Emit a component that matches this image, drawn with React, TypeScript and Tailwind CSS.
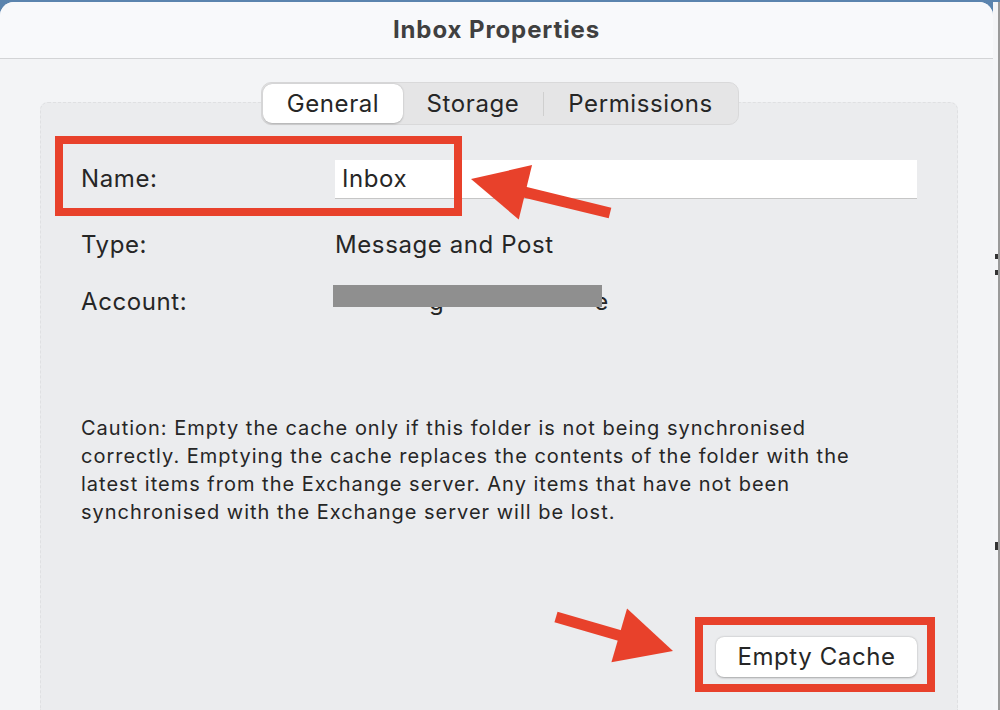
import React from "react"

const font = { fontFamily: "Inter, 'Noto Sans', sans-serif" }

function Arrow({ x1, y1, x2, y2 }: { x1: number; y1: number; x2: number; y2: number }) {
  // shaft from (x1,y1) toward head at (x2,y2)
  const dx = x2 - x1
  const dy = y2 - y1
  const len = Math.hypot(dx, dy)
  const ux = dx / len
  const uy = dy / len
  const headLen = 56
  const headW = 28
  const bx = x2 - ux * headLen
  const by = y2 - uy * headLen
  const px = -uy
  const py = ux
  return (
    <g>
      <line x1={x1} y1={y1} x2={bx + ux * 4} y2={by + uy * 4} stroke="#e8412b" strokeWidth={11} />
      <polygon
        points={`${x2},${y2} ${bx + px * headW},${by + py * headW} ${bx - px * headW},${by - py * headW}`}
        fill="#e8412b"
      />
    </g>
  )
}

export default function App() {
  return (
    <div className="relative w-[1000px] h-[710px] overflow-hidden bg-[#5b84ae]" style={font}>
      <div className="flex h-full pt-[2px]">
        <div className="w-[993px] h-full flex flex-col rounded-t-[14px] bg-[#f3f4f6] overflow-hidden">
          <div className="h-[57px] shrink-0 flex items-center justify-center bg-[#f8f9fb] border-b border-[#d3d4d6]">
            <span className="text-[24px] font-bold text-[#404040] tracking-[0.9px]">Inbox Properties</span>
          </div>
          <div className="relative flex-1 px-[40px] pt-[43px] pr-[35px]">
            <div className="h-full rounded-t-[8px] bg-[#ebecee] border border-dashed border-[#dfe0e2] border-b-0 px-[40px] pt-[56px] flex flex-col text-[24px] tracking-[0.6px] text-[#262626]">
              <div className="flex items-center h-[40px]">
                <span className="w-[254px]">Name:</span>
                <div className="flex-1 h-[39px] bg-white border-b border-[#c6c6c6] flex items-center px-[7px]">
                  Inbox
                </div>
              </div>
              <div className="flex items-center h-[40px] mt-[26px]">
                <span className="w-[254px]">Type:</span>
                <span>Message and Post</span>
              </div>
              <div className="flex items-center h-[40px] mt-[17px]">
                <span className="w-[252px]">Account:</span>
                <div className="relative">
                  <span className="pl-[96px]">g</span>
                  <span className="absolute left-0 top-[1px] w-[269px] h-[22px] bg-[#8f8f8f]" />
                  <span className="pl-[150px]">e</span>
                </div>
              </div>
              <p className="mt-[92px] text-[20px] leading-[28px] tracking-[1px] w-[790px]">
                Caution: Empty the cache only if this folder is not being synchronised correctly. Emptying the cache replaces the contents of the folder with the latest items from the Exchange server. Any items that have not been synchronised with the Exchange server will be lost.
              </p>
              <div className="flex justify-end mt-[111px]">
                <button className="w-[201px] h-[40px] rounded-[8px] bg-white shadow-[0_0.5px_2px_rgba(0,0,0,0.3)] tracking-[0.6px]">
                  Empty Cache
                </button>
              </div>
            </div>
            <div className="absolute left-[261px] top-[23px] w-[478px] h-[43px] rounded-[10px] bg-[#e5e5e6] border border-[#d9d9da] flex items-center p-[1px] text-[24px] tracking-[0.6px] text-[#262626]">
              <div className="w-[140px] h-full rounded-[9px] bg-white shadow-[0_0.5px_2px_rgba(0,0,0,0.25)] flex items-center justify-center">
                General
              </div>
              <div className="w-[140px] flex items-center justify-center">Storage</div>
              <div className="w-px h-[24px] bg-[#cfcfcf]" />
              <div className="flex-1 flex items-center justify-center">Permissions</div>
            </div>
          </div>
        </div>
        <div className="flex-1 bg-[#f4f5f7] border-r-[2px] border-[#9a9a9a] relative">
          <span className="absolute right-0 top-[252px] w-[3px] h-[5px] bg-[#333]" />
          <span className="absolute right-0 top-[268px] w-[3px] h-[5px] bg-[#333]" />
          <span className="absolute right-0 top-[540px] w-[3px] h-[8px] bg-[#333]" />
        </div>
      </div>

      <div className="absolute left-[55px] top-[136px] w-[407px] h-[80px] border-[8px] border-[#e8412b]" />
      <div className="absolute left-[695px] top-[617px] w-[240px] h-[75px] border-[8px] border-[#e8412b]" />
      <svg className="absolute left-0 top-0" width="1000" height="710">
        <Arrow x1={610} y1={213} x2={471} y2={179} />
        <Arrow x1={556} y1={617} x2={673} y2={651} />
      </svg>
    </div>
  )
}
